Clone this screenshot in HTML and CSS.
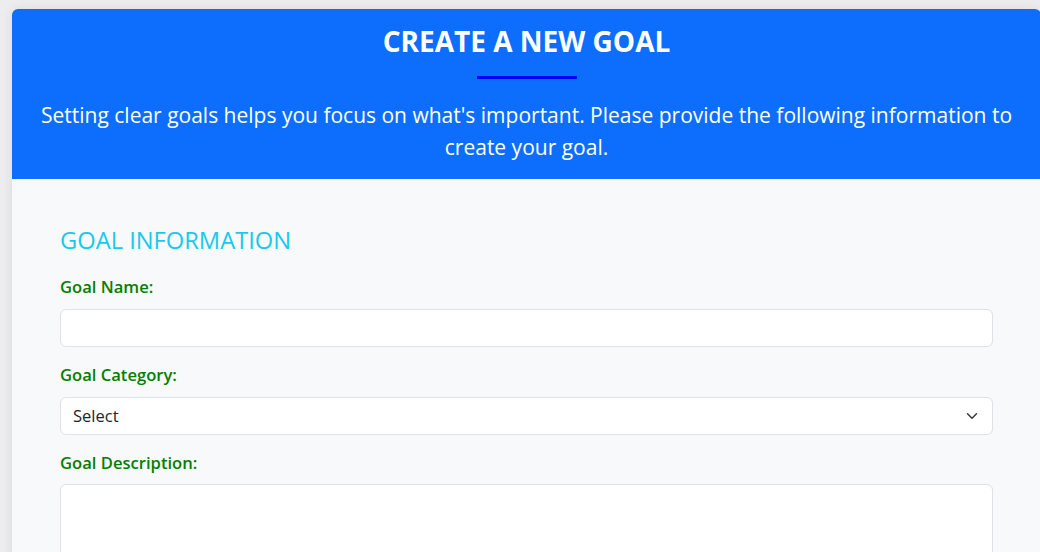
FILE: index.html
```html
<!DOCTYPE html>
<html lang="en">
<head>
<meta charset="utf-8">
<title>Create a New Goal</title>
<link rel="stylesheet" href="styles.css">
</head>
<body>
<div class="page">
  <div class="card">
    <header class="card-header">
      <h2 class="title">CREATE A NEW GOAL</h2>
      <div class="title-bar"></div>
      <p class="lead">Setting clear goals helps you focus on what's important. Please provide the following information to create your goal.</p>
    </header>
    <form class="card-body">
      <h4 class="section-title">GOAL INFORMATION</h4>
      <div class="field">
        <label class="label" for="goalName">Goal Name:</label>
        <input class="control" id="goalName" type="text">
      </div>
      <div class="field">
        <label class="label" for="goalCategory">Goal Category:</label>
        <div class="select-wrap">
          <select class="control select" id="goalCategory">
            <option>Select</option>
            <option>Health</option>
            <option>Career</option>
            <option>Finance</option>
          </select>
          <svg class="chevron" viewBox="0 0 16 16" width="16" height="12" aria-hidden="true"><path d="m2 5 6 6 6-6" fill="none" stroke="#343a40" stroke-width="2" stroke-linecap="round" stroke-linejoin="round"/></svg>
        </div>
      </div>
      <div class="field">
        <label class="label label-tight" for="goalDesc">Goal Description:</label>
        <textarea class="control textarea" id="goalDesc" rows="5"></textarea>
      </div>
    </form>
  </div>
</div>
</body>
</html>
```

FILE: styles.css
```css
* { box-sizing: border-box; }
html, body { margin: 0; padding: 0; }
body {
  background: #ededf0;
  font-family: "Open Sans", "Liberation Sans", sans-serif;
  color: #212529;
  overflow: hidden;
}
.page {
  padding: 9px 0 0 12px;
}
.card {
  width: 1029px;
  border-radius: 6px 6px 0 0;
  overflow: hidden;
  box-shadow: 0 0 12px rgba(0, 0, 0, 0.08);
  background: #f8f9fa;
}
.card-header {
  background: #0d6efd;
  color: #fff;
  text-align: center;
  padding: 14px 24px 16px;
  display: flex;
  flex-direction: column;
  align-items: center;
}
.title {
  margin: 0;
  font-size: 28px;
  font-weight: 700;
  line-height: 36px;
}
.title-bar {
  width: 100px;
  height: 3px;
  background: #0000ff;
  margin: 17px 0 20px;
}
.lead {
  margin: 0;
  font-size: 21px;
  line-height: 32px;
  font-weight: 400;
}
.card-body {
  padding: 47px 48px 40px;
}
.section-title {
  margin: 0 0 20px;
  font-size: 23.7px;
  line-height: 29px;
  font-weight: 400;
  color: #18c9ec;
}
.field {
  margin-bottom: 16px;
}
.label {
  display: block;
  color: #008000;
  font-size: 16.6px;
  font-weight: 600;
  line-height: 24px;
  margin-bottom: 10px;
}
.label-tight {
  margin-bottom: 9px;
}
.control {
  display: block;
  width: 100%;
  height: 38px;
  padding: 6px 12px;
  font-family: inherit;
  font-size: 16.5px;
  line-height: 24px;
  color: #212529;
  background: #fff;
  border: 1px solid #dee2e6;
  border-radius: 6px;
  outline: none;
}
.select-wrap {
  position: relative;
}
.select {
  appearance: none;
  -webkit-appearance: none;
  padding-right: 36px;
}
.chevron {
  position: absolute;
  right: 13px;
  top: 13px;
  pointer-events: none;
}
.textarea {
  height: 140px;
  resize: vertical;
}
```
